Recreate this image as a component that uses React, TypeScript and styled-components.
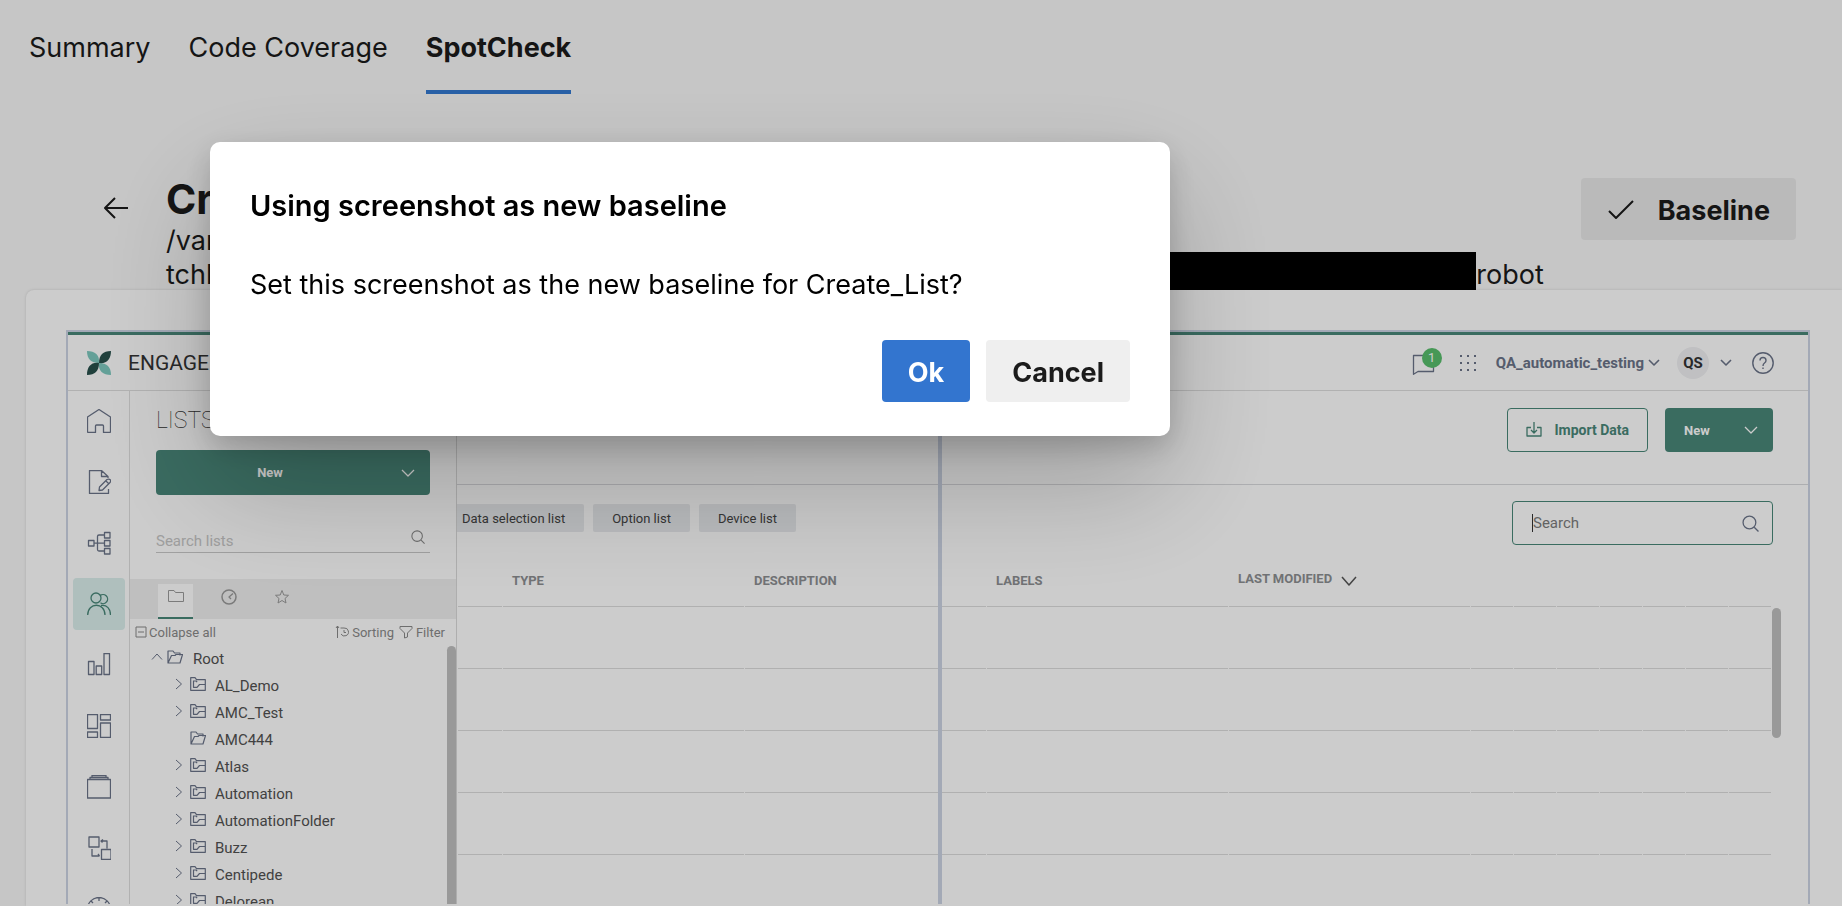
import React from "react";
import styled, { createGlobalStyle, css } from "styled-components";

const ui = `Inter, "Liberation Sans", sans-serif`;
const roboto = `Roboto, "Liberation Sans", sans-serif`;
const green = "#498779";
const slate = "#6b7489";

const GlobalStyle = createGlobalStyle`
  * { box-sizing: border-box; }
  body { margin: 0; background: #f8f8f8; font-family: ${ui}; color: #1b1b1b; }
  button { font: inherit; border: 0; padding: 0; background: none; color: inherit; cursor: pointer; }
  h1, h2, p { margin: 0; }
  svg { display: block; flex: none; }
`;

const Page = styled.div`
  display: flex;
  flex-direction: column;
  height: 100vh;
  overflow: hidden;
`;

/* ---------- report page ---------- */

const Tabs = styled.nav`
  display: flex;
  flex: none;
  gap: 38px;
  padding-left: 29px;
`;

const TabLink = styled.a<{ $active?: boolean }>`
  height: 94px;
  padding-top: 31px;
  font-size: 27px;
  line-height: 34px;
  color: #1b1b1b;
  text-decoration: none;
  border-bottom: 4px solid ${(p) => (p.$active ? "#3379d0" : "transparent")};
  font-weight: ${(p) => (p.$active ? 700 : 400)};
`;

const Header = styled.header`
  display: flex;
  flex: none;
  align-items: flex-start;
  margin-top: 81px;
  padding: 0 46px 0 100px;
`;

const BackButton = styled.button`
  width: 32px;
  height: 32px;
  margin: 17px 34px 0 0;
`;

const HeaderText = styled.div`
  flex: 1;
  min-width: 0;
  margin-right: 37px;
`;

const PageTitle = styled.h1`
  font-size: 41px;
  line-height: 49px;
  font-weight: 700;
`;

const PathLine = styled.div`
  display: flex;
  font-size: 27px;
  line-height: 34px;
  height: 34px;

  &:last-child { height: 32px; }
`;

const Redaction = styled.span`
  flex: 1;
  height: 38px;
  margin-top: -6px;
  background: #000;
`;

const BaselineButton = styled.button`
  display: flex;
  align-items: center;
  gap: 23px;
  height: 62px;
  margin-top: 3px;
  padding: 2px 26px 0;
  border-radius: 4px;
  background: #e9e9e9;
  font-size: 27px;
  font-weight: 700;
`;

const Panel = styled.main`
  display: flex;
  flex: 1;
  min-height: 0;
  margin-left: 26px;
  padding: 40px 32px 2px 40px;
  background: #fff;
  border-top-left-radius: 8px;
  box-shadow: 0 0 3px rgba(0, 0, 0, 0.15);
`;

/* ---------- captured application ---------- */

const Frame = styled.section`
  position: relative;
  display: flex;
  flex: 1;
  flex-direction: column;
  min-width: 0;
  overflow: hidden;
  border: 2px solid #ccd4e4;
  border-bottom: 0;
  font-family: ${roboto};
`;

const CompareHandle = styled.div`
  position: absolute;
  top: 0;
  bottom: 0;
  left: 50%;
  width: 4px;
  background: #ccd4e4;
`;

const AppBar = styled.div`
  display: flex;
  flex: none;
  align-items: center;
  height: 59px;
  padding: 0 34px 0 19px;
  border-top: 3px solid ${green};
  border-bottom: 1px solid #dedede;
`;

const Brand = styled.div`
  margin: 0 auto 0 17px;
  font-size: 21px;
  color: #333;
`;

const Messages = styled.button`
  position: relative;
  width: 24px;
  height: 24px;
  margin-right: 24px;
`;

const Badge = styled.span`
  position: absolute;
  top: -3px;
  left: 11px;
  width: 20px;
  height: 20px;
  border-radius: 50%;
  background: #58bf6c;
  color: #fff;
  font-size: 13px;
  line-height: 20px;
`;

const IconButton = styled.button<{ $right: number }>`
  margin-right: ${(p) => p.$right}px;
  color: ${slate};
`;

const Account = styled.button<{ $right: number }>`
  display: flex;
  align-items: center;
  gap: 4px;
  margin-right: ${(p) => p.$right}px;
  font-size: 15px;
  font-weight: 700;
  color: ${slate};
`;

const Avatar = styled.span`
  width: 32px;
  height: 32px;
  border-radius: 50%;
  background: #f0f1f3;
  color: #333;
  font-size: 15px;
  font-weight: 700;
  line-height: 32px;
  text-align: center;
`;

const AppBody = styled.div`
  display: flex;
  flex: 1;
  min-height: 0;
`;

const Rail = styled.nav`
  display: flex;
  flex: none;
  flex-direction: column;
  align-items: center;
  gap: 9px;
  width: 62px;
  padding-top: 4px;
  border-right: 1px solid #dedede;
`;

const RailItem = styled.button<{ $active?: boolean }>`
  display: flex;
  flex: none;
  align-items: center;
  justify-content: center;
  width: 52px;
  height: 52px;
  border-radius: 4px;
  background: ${(p) => (p.$active ? "#dbefed" : "none")};
  color: ${(p) => (p.$active ? green : slate)};
`;

const Sidebar = styled.aside`
  display: flex;
  flex: none;
  flex-direction: column;
  width: 327px;
  border-right: 1px solid #dadada;
`;

const SidebarTitle = styled.h2`
  padding: 15px 26px 0;
  font-size: 23px;
  font-weight: 100;
  line-height: 30px;
  color: #333;
`;

const greenButton = css`
  display: flex;
  align-items: center;
  background: ${green};
  color: #fff;
  font-size: 13px;
  font-weight: 700;
  border-radius: 4px;
`;

const SidebarNew = styled.button`
  ${greenButton}
  flex: none;
  height: 45px;
  margin: 14px 26px 0;
  padding: 0 15px;

  span { flex: 1; text-align: center; padding-right: 32px; }
`;

const SidebarSearch = styled.label`
  display: flex;
  flex: none;
  align-items: flex-end;
  height: 58px;
  margin: 0 26px;
  padding: 0 5px 2px 0;
  border-bottom: 1px solid #c8c8c8;
  color: #888;

  input {
    flex: 1;
    min-width: 0;
    padding: 0;
    border: 0;
    outline: 0;
    background: none;
    font: 15px/18px ${roboto};
  }
  input::placeholder { color: #c6c6c6; opacity: 1; }
  svg { margin-bottom: 6px; }
`;

const FolderTabs = styled.div`
  display: flex;
  flex: none;
  gap: 18px;
  height: 40px;
  margin-top: 26px;
  padding: 5px 0 0 28px;
  background: #efefef;
  color: #9a9a9a;
`;

const FolderTab = styled.button<{ $active?: boolean }>`
  display: flex;
  justify-content: center;
  width: 35px;
  padding-top: 5px;
  background: ${(p) => (p.$active ? "#fff" : "none")};
  border-bottom: 2px solid ${(p) => (p.$active ? green : "transparent")};
`;

const TreeTools = styled.div`
  display: flex;
  flex: none;
  align-items: center;
  gap: 5px;
  height: 26px;
  padding: 0 11px 0 5px;
  color: #8a8a8a;
  font-size: 13px;
`;

const TreeTool = styled.button<{ $push?: boolean }>`
  display: flex;
  align-items: center;
  gap: ${(p) => (p.$push ? 2 : 3)}px;
  margin-right: ${(p) => (p.$push ? "auto" : "0")};
`;

const TreeArea = styled.div`
  display: flex;
  flex: 1;
  align-items: stretch;
  justify-content: space-between;
  min-height: 0;
  overflow: hidden;
`;

const Tree = styled.ul`
  flex: 1;
  margin: 0;
  padding: 0;
  list-style: none;
`;

const TreeRow = styled.li<{ $depth: number }>`
  display: flex;
  align-items: center;
  height: 27px;
  padding-left: ${(p) => (p.$depth ? 43 : 21)}px;
  color: #525252;
  font-size: 15px;

  svg { color: ${slate}; margin-bottom: 4px; }
  span { margin-left: ${(p) => (p.$depth ? 9 : 10)}px; }
`;

const TwistSlot = styled.i<{ $wide?: boolean }>`
  display: flex;
  flex: none;
  justify-content: center;
  width: ${(p) => (p.$wide ? 16 : 17)}px;
  padding-right: 5px;
`;

const TreeScrollbar = styled.div`
  width: 9px;
  margin-top: 1px;
  border-radius: 5px 5px 0 0;
  background: #c0c0c0;
`;

const Content = styled.div`
  display: flex;
  flex: 1;
  flex-direction: column;
  min-width: 0;
`;

const Actions = styled.div`
  display: flex;
  flex: none;
  justify-content: flex-end;
  gap: 17px;
  height: 94px;
  padding: 17px 35px 0;
  border-bottom: 1px solid #d9dadd;
`;

const ImportButton = styled.button`
  display: flex;
  align-items: center;
  gap: 12px;
  height: 44px;
  padding: 0 18px;
  border: 1px solid ${green};
  border-radius: 4px;
  color: ${green};
  font-size: 14px;
  font-weight: 700;
`;

const NewButton = styled.button`
  ${greenButton}
  justify-content: space-between;
  width: 108px;
  height: 44px;
  padding: 0 15px 0 19px;
`;

const Filters = styled.div`
  display: flex;
  flex: none;
  align-items: flex-start;
  gap: 9px;
  height: 72px;
  padding: 16px 35px 0 0;
`;

const Chip = styled.button<{ $cut?: boolean }>`
  height: 28px;
  margin-top: 3px;
  padding: 0 19px 0 ${(p) => (p.$cut ? 5 : 19)}px;
  border-radius: ${(p) => (p.$cut ? "0 2px 2px 0" : "2px")};
  background: #e9ebee;
  color: #444;
  font-size: 13px;
`;

const SearchField = styled.label`
  display: flex;
  align-items: center;
  width: 261px;
  height: 44px;
  margin-left: auto;
  padding: 0 13px 0 19px;
  border: 1px solid ${green};
  border-radius: 4px;
  color: ${slate};

  input {
    flex: 1;
    min-width: 0;
    padding: 0;
    border: 0;
    outline: 0;
    background: none;
    font: 15px ${roboto};
  }
  input::placeholder { color: #7c7c7c; opacity: 1; }
`;

const Caret = styled.i`
  width: 1px;
  height: 18px;
  background: #333;
`;

const TableArea = styled.div`
  display: flex;
  flex: 1;
  align-items: flex-start;
  min-height: 0;
  padding-right: 27px;
  overflow: hidden;
`;

const Table = styled.table`
  flex: 1;
  width: 100%;
  table-layout: fixed;
  border-spacing: 1px 0;

  th {
    height: 50px;
    padding: 0 0 2px 9px;
    border-bottom: 1px solid #dcdcdc;
    color: #8d8f92;
    font-size: 13px;
    font-weight: 700;
    text-align: left;
    white-space: nowrap;
  }
  td {
    height: 62px;
    padding: 0;
    border-bottom: 1px solid #dcdcdc;
  }
`;

const FirstCol = styled.col`width: 44px;`;
const SlimCol = styled.col`width: 42px;`;

const SortButton = styled.button`
  display: flex;
  align-items: center;
  gap: 9px;
  padding-bottom: 4px;
  font-weight: 700;

  svg { color: #555; margin-top: 4px; }
`;

const TableScrollbar = styled.div`
  width: 9px;
  height: 130px;
  margin-top: 51px;
  border-radius: 5px;
  background: #c0c0c0;
`;

/* ---------- dialog ---------- */

const Overlay = styled.div`
  position: fixed;
  inset: 0;
  padding: 142px 210px;
  background: rgba(0, 0, 0, 0.2);
`;

const Dialog = styled.div`
  max-width: 960px;
  padding: 45px 40px 34px;
  border-radius: 10px;
  background: #fff;
  box-shadow: 0 51px 115px rgba(0, 0, 0, 0.22), 0 10px 29px rgba(0, 0, 0, 0.18);
  color: #000;
`;

const DialogTitle = styled.h2`
  font-size: 29px;
  line-height: 38px;
  font-weight: 600;
`;

const DialogText = styled.p`
  margin-top: 42px;
  font-size: 27px;
  line-height: 36px;
`;

const DialogActions = styled.div`
  display: flex;
  justify-content: flex-end;
  gap: 16px;
  margin-top: 37px;
`;

const DialogButton = styled.button<{ $primary?: boolean }>`
  height: 62px;
  padding: 2px 26px 0;
  border-radius: 4px;
  background: ${(p) => (p.$primary ? "#3375cf" : "#efefef")};
  color: ${(p) => (p.$primary ? "#fff" : "#1b1b1b")};
  font-size: 27px;
  font-weight: 700;
`;

/* ---------- icons ---------- */

type IconProps = { w?: number; h?: number; box?: string; sw?: number; children: React.ReactNode };

const Icon = ({ w = 24, h = w, box = `0 0 ${w} ${h}`, sw = 1, children }: IconProps) => (
  <svg width={w} height={h} viewBox={box} fill="none" stroke="currentColor" strokeWidth={sw} strokeLinejoin="round" aria-hidden="true">
    {children}
  </svg>
);

const Chevron = ({ w = 14, h = 8, sw = 1.3 }: { w?: number; h?: number; sw?: number }) => (
  <Icon w={w} h={h} sw={sw}>
    <path d={`M1 1 L${w / 2} ${h - 1} L${w - 1} 1`} />
  </Icon>
);

const Magnifier = ({ size = 14 }: { size?: number }) => (
  <Icon w={size} box="0 0 16 16" sw={1.2}>
    <circle cx="7" cy="7" r="6" />
    <path d="M11.5 11.5 L15.5 15.5" />
  </Icon>
);

const OpenFolder = () => (
  <Icon w={16} h={14} sw={1.2}>
    <path d="M1 13 V1 H6 L7.5 3 H13 V5.5 M1 13 L4.5 5.5 H8 L9 4.5 H15.5 L13 13 Z" />
  </Icon>
);

const NestedFolder = () => (
  <Icon w={16} h={14} sw={1.2}>
    <path d="M.7 13.3 V.7 H5 L6.500 2.700 H15.300 V13.300 Z M3.500 3.500 V10.300 H7 L9.500 7.500 H15.300 M3.500 4 H6 L7.200 5.200" />
  </Icon>
);

const railIcons: { name: string; art: React.ReactNode }[] = [
  { name: "Home", art: <path d="M.5 8 L12 .5 L23.500 8 V22.500 Q23.500 23.500 22.500 23.500 H16.500 V17 Q16.500 16 15.500 16 H9.500 Q8.500 16 8.500 17 V23.500 H1.500 Q.5 23.500 .5 22.500 Z" /> },
  { name: "Content", art: <path d="M21 8 V6.500 L14.500 .5 H2.500 V23.500 H21.500 V19 M14.500 .5 V6.500 H21 M12 20.500 L12.500 17 L20 9.500 Q22 8.500 23.500 10 Q24 11.500 23 12.500 L15.500 20 Z M19 11 L21.500 13.500" /> },
  { name: "Flows", art: <path d="M1.500 9.500 H7 V15 H1.500 Z M17.500 1.500 H23 V7 H17.500 Z M17.500 9.500 H23 V15 H17.500 Z M17.500 17.500 H23 V23 H17.500 Z M7 12.200 H17.500 M17.500 4 H12 Q10.500 4 10.500 5.500 V18.500 Q10.500 20 12 20 H17.500" /> },
  { name: "Audience", art: <path d="M14 6 A5 5 0 1 1 4 6 A5 5 0 1 1 14 6 M13 3.800 A4.500 4.500 0 1 1 13.500 10.800 M.7 23 C.7 10 18 10 18 23 M14 13.500 C20 12.500 23.500 17 23.500 23" /> },
  { name: "Reports", art: <path d="M1.500 8.500 H7 V21.500 H1.500 Z M9.200 13 H14.700 V21.500 H9.200 Z M17 .5 H22.500 V21.500 H17 Z" /> },
  { name: "Dashboards", art: <path d="M.5 .5 H10.500 V14.500 H.5 Z M.5 18 H10.500 V23.500 H.5 Z M13.500 .5 H23.500 V6 H13.500 Z M13.500 9 H23.500 V23.500 H13.500 Z" /> },
  { name: "Archive", art: <path d="M.5 4.500 H23.500 V23 H.5 Z M3 4.500 V2.500 H21 V4.500 M5 2.500 V.5 H19 V2.500" /> },
  { name: "Integrations", art: <path d="M2 1 H12 V11 H2 Z M14.500 13.500 H24 V23.500 H14.500 Z M14 5 H20 V12.500 M5 13 V20 H12.500 M16 3.500 L14 5 L15.500 6.500 M11 18 L12.500 20" /> },
  { name: "Performance", art: <path d="M.5 12 A11.500 11.500 0 1 1 23.500 12 A11.500 11.500 0 1 1 .5 12 M12 .5 V4 M4 4 L6 6 M20 4 L18 6 M.5 12 H3.500 M20.500 12 H23.500" /> },
];

const folders = ["AL_Demo", "AMC_Test", "AMC444", "Atlas", "Automation", "AutomationFolder", "Buzz", "Centipede", "Delorean"];

const slimColumns = [0, 1, 2, 3, 4, 5, 6];
const emptyRows = [0, 1, 2, 3, 4];

/* ---------- view ---------- */

const CapturedApp = () => (
  <Frame aria-label="Captured screenshot">
    <AppBar>
      <svg width="24" height="24" viewBox="0 0 24 24" aria-hidden="true">
        <path fill="#7dc9bf" d="M0 0 C8 0 13 4 12 12 C4 12 0 8 0 0 Z M24 24 C16 24 11 20 12 12 C20 12 24 16 24 24 Z" />
        <path fill="#28504c" d="M24 0 C24 8 20 13 12 12 C12 4 16 0 24 0 Z M0 24 C0 16 4 11 12 12 C12 20 8 24 0 24 Z" />
      </svg>
      <Brand>ENGAGE</Brand>
      <Messages aria-label="Messages">
        <Icon w={24} sw={1.3}>
          <path stroke={slate} d="M2.500 4.500 H22.500 V20.500 H7 L2.500 23.300 Z" />
        </Icon>
        <Badge>1</Badge>
      </Messages>
      <IconButton $right={19} aria-label="Apps">
        <svg width="18" height="18" viewBox="0 0 18 18" fill={slate} aria-hidden="true">
          {[1, 8, 15].map((y) => [1, 8, 15].map((x) => <rect key={`${x}-${y}`} x={x} y={y} width="2" height="2" />))}
        </svg>
      </IconButton>
      <Account $right={17}>
        QA_automatic_testing
        <Chevron w={12} h={7} sw={1.6} />
      </Account>
      <Account $right={11} aria-label="User QS">
        <Avatar>QS</Avatar>
      </Account>
      <IconButton $right={20} aria-label="Profile menu">
        <Chevron w={12} h={7} sw={1.6} />
      </IconButton>
      <IconButton $right={0} aria-label="Help">
        <Icon w={22} sw={1.4}>
          <circle cx="11" cy="11" r="10.200" />
          <path d="M8 8.500 Q8 5.500 11 5.500 Q14 5.500 14 8.500 Q14 10 12.500 11 Q11 12 11 14 M11 15.500 V17" />
        </Icon>
      </IconButton>
    </AppBar>
    <AppBody>
      <Rail>
        {railIcons.map((item) => (
          <RailItem key={item.name} $active={item.name === "Audience"} aria-label={item.name}>
            <Icon w={24} sw={1.3}>{item.art}</Icon>
          </RailItem>
        ))}
      </Rail>
      <Sidebar>
        <SidebarTitle>LISTS</SidebarTitle>
        <SidebarNew>
          <span>New</span>
          <Chevron />
        </SidebarNew>
        <SidebarSearch>
          <input type="text" placeholder="Search lists" aria-label="Search lists" />
          <Magnifier />
        </SidebarSearch>
        <FolderTabs>
          <FolderTab $active aria-label="Folders">
            <Icon w={16} h={14}><path d="M.5 12.500 V1.500 H6 L7.500 3.500 H15.500 V12.500 Z" /></Icon>
          </FolderTab>
          <FolderTab aria-label="Recent">
            <Icon w={16}><circle cx="8" cy="8" r="7" strokeWidth="1.500" /><path d="M12 4.500 L8 8 L10 10" strokeWidth="1.300" /></Icon>
          </FolderTab>
          <FolderTab aria-label="Favorites">
            <Icon w={16}><path d="M8 1.500 L9.800 6 L14.500 6.300 L11 9.500 L12 14 L8 11.500 L4 14 L5 9.500 L1.500 6.300 L6.200 6 Z" /></Icon>
          </FolderTab>
        </FolderTabs>
        <TreeTools>
          <TreeTool $push>
            <Icon w={12}><path d="M1 1 H11 V11 H1 Z M3 6 H9" /></Icon>
            Collapse all
          </TreeTool>
          <TreeTool>
            <Icon w={14}><path d="M2.500 13 V1 M1 3 L2.500 1 L4 3 M5.500 3 H9 A4 4 0 1 1 6 9 M9 5 V7.500 H11" /></Icon>
            Sorting
          </TreeTool>
          <TreeTool>
            <Icon w={14}><path d="M1 1.500 H13 V3.500 L8.500 8 V12 L5.500 13 V8 L1 3.500 Z" /></Icon>
            Filter
          </TreeTool>
        </TreeTools>
        <TreeArea>
          <Tree>
            <TreeRow $depth={0}>
              <TwistSlot $wide>
                <Icon w={12} h={8}><path d="M1 6.500 L6 1 L11 6.500" /></Icon>
              </TwistSlot>
              <OpenFolder />
              <span>Root</span>
            </TreeRow>
            {folders.map((name) => (
              <TreeRow key={name} $depth={1}>
                <TwistSlot>
                  {name !== "AMC444" && <Icon w={8} h={12}><path d="M1 1 L6.500 6 L1 11" /></Icon>}
                </TwistSlot>
                {name === "AMC444" ? <OpenFolder /> : <NestedFolder />}
                <span>{name}</span>
              </TreeRow>
            ))}
          </Tree>
          <TreeScrollbar />
        </TreeArea>
      </Sidebar>
      <Content>
        <Actions>
          <ImportButton>
            <Icon w={16} sw={1.3}><path d="M5 5.500 H1 V14 H15 V5.500 H11 M8 0 V10.500 M5 8 L8 11 L11 8" /></Icon>
            Import Data
          </ImportButton>
          <NewButton>
            New
            <Chevron />
          </NewButton>
        </Actions>
        <Filters>
          <Chip $cut>Data selection list</Chip>
          <Chip>Option list</Chip>
          <Chip>Device list</Chip>
          <SearchField>
            <Caret />
            <input type="text" placeholder="Search" aria-label="Search" />
            <Magnifier size={17} />
          </SearchField>
        </Filters>
        <TableArea>
          <Table>
            <colgroup>
              <FirstCol />
              <col />
              <col />
              <col />
              <col />
              {slimColumns.map((c) => <SlimCol key={c} />)}
            </colgroup>
            <thead>
              <tr>
                <th />
                <th>TYPE</th>
                <th>DESCRIPTION</th>
                <th>LABELS</th>
                <th>
                  <SortButton>
                    LAST MODIFIED
                    <Chevron w={16} h={10} sw={1.5} />
                  </SortButton>
                </th>
                {slimColumns.map((c) => <th key={c} />)}
              </tr>
            </thead>
            <tbody>
              {emptyRows.map((r) => (
                <tr key={r}>
                  <td /><td /><td /><td /><td />
                  {slimColumns.map((c) => <td key={c} />)}
                </tr>
              ))}
            </tbody>
          </Table>
          <TableScrollbar />
        </TableArea>
      </Content>
    </AppBody>
    <CompareHandle />
  </Frame>
);

export default function App() {
  return (
    <>
      <GlobalStyle />
      <Page>
        <Tabs>
          <TabLink href="#summary">Summary</TabLink>
          <TabLink href="#coverage">Code Coverage</TabLink>
          <TabLink href="#spotcheck" $active>SpotCheck</TabLink>
        </Tabs>
        <Header>
          <BackButton aria-label="Back">
            <Icon w={32} sw={2}><path d="M28 16 H5 M15 6 L5 16 L15 26" /></Icon>
          </BackButton>
          <HeaderText>
            <PageTitle>Create_List</PageTitle>
            <PathLine>/var</PathLine>
            <PathLine>
              tchl
              <Redaction />
              robot
            </PathLine>
          </HeaderText>
          <BaselineButton>
            <Icon w={28} h={20} sw={2}><path d="M2 11 L9 18 L26 1" /></Icon>
            Baseline
          </BaselineButton>
        </Header>
        <Panel>
          <CapturedApp />
        </Panel>
      </Page>
      <Overlay>
        <Dialog role="dialog" aria-modal="true" aria-labelledby="dialog-title">
          <DialogTitle id="dialog-title">Using screenshot as new baseline</DialogTitle>
          <DialogText>Set this screenshot as the new baseline for Create_List?</DialogText>
          <DialogActions>
            <DialogButton $primary>Ok</DialogButton>
            <DialogButton>Cancel</DialogButton>
          </DialogActions>
        </Dialog>
      </Overlay>
    </>
  );
}
